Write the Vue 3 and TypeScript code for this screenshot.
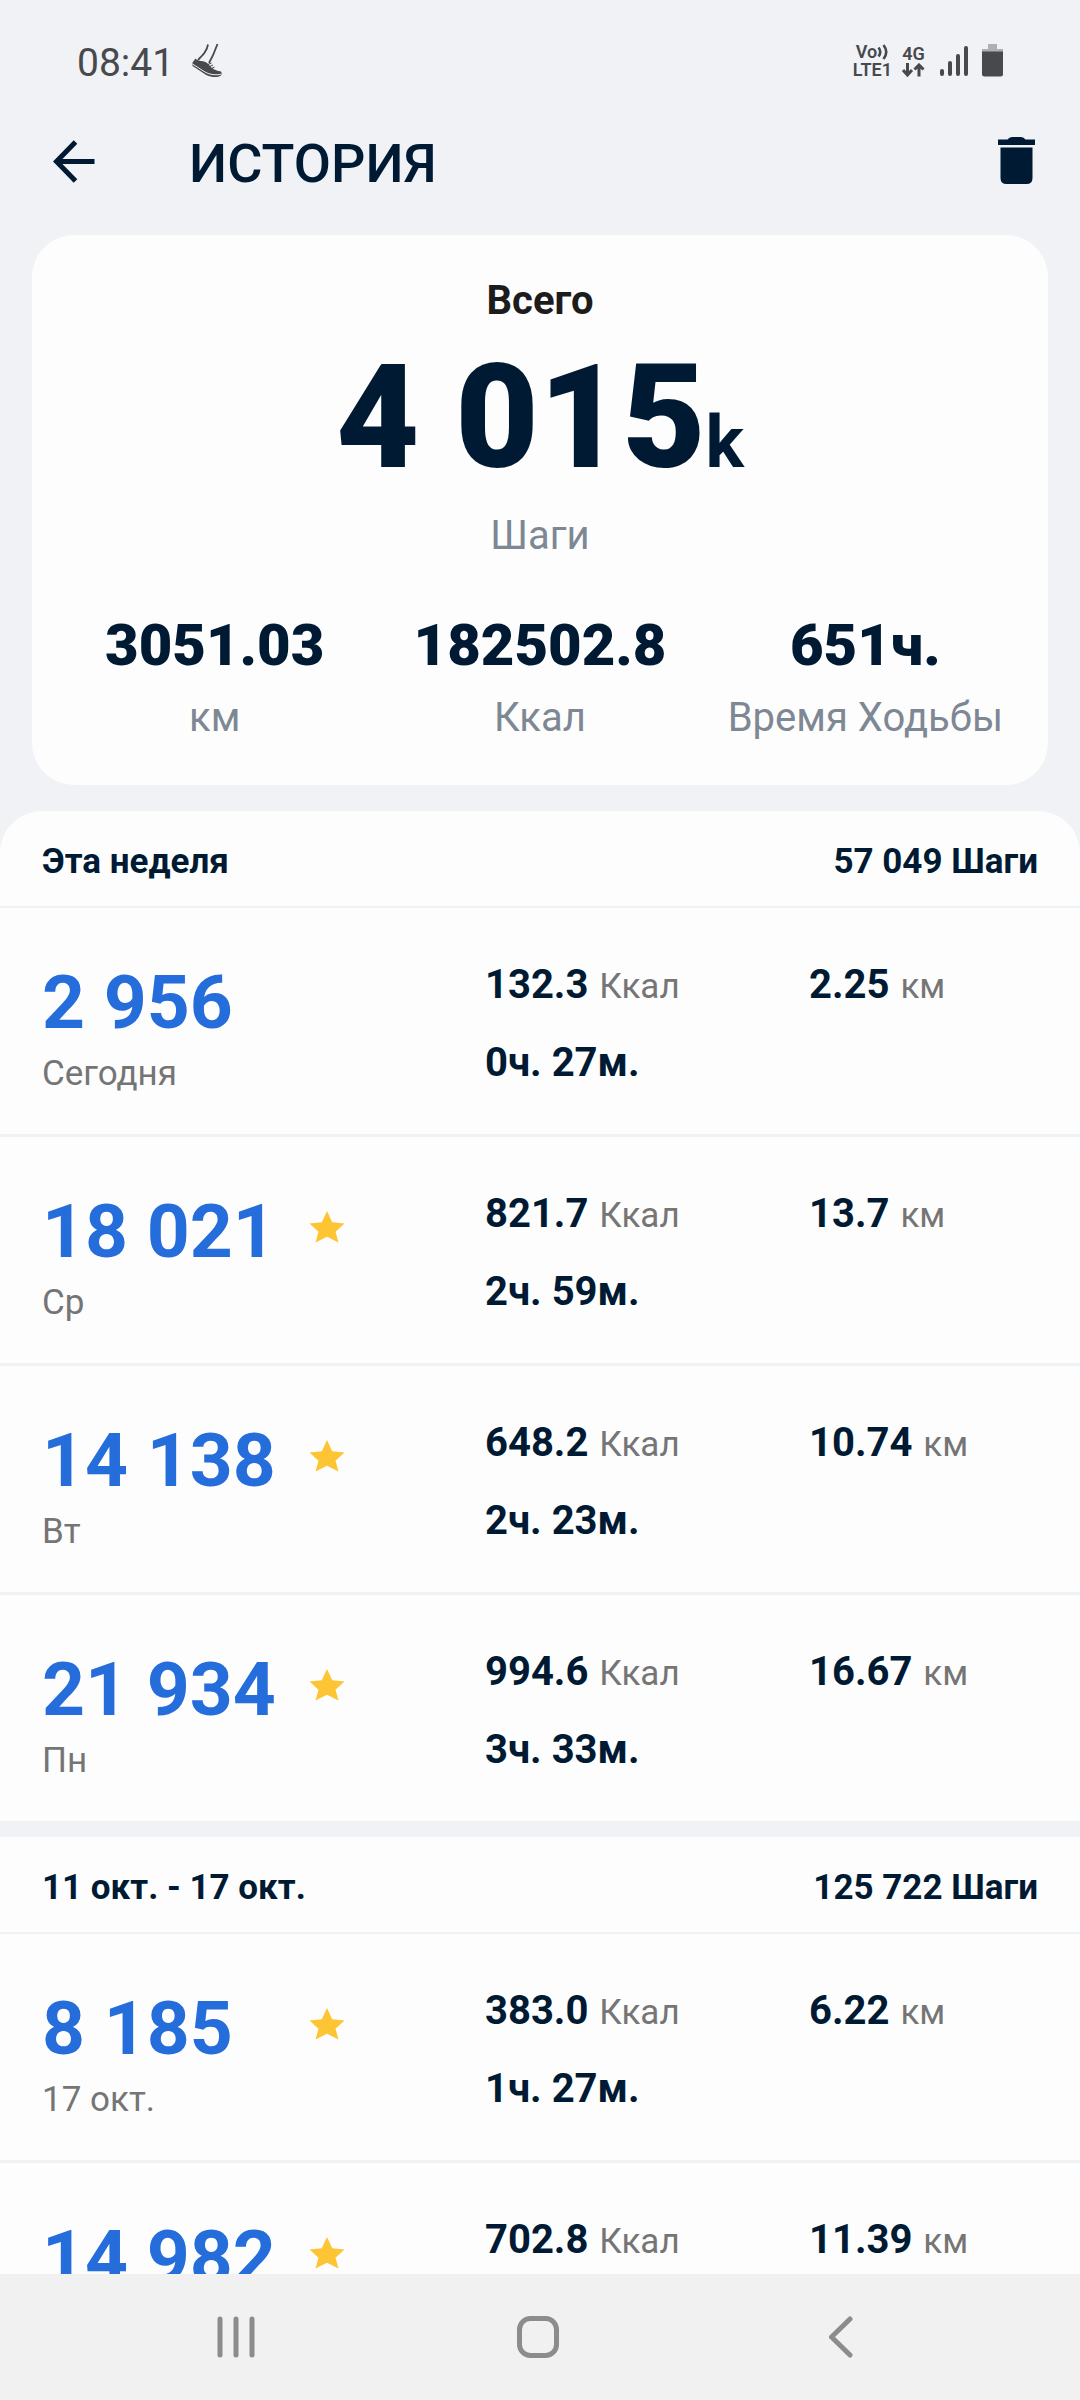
<script setup lang="ts">
interface Day {
  steps: string
  label: string
  goal: boolean
  kcal: string
  km: string
  time: string
}

interface Week {
  title: string
  total: string
  days: Day[]
}

const totals = [
  { value: '3051.03', label: 'км' },
  { value: '182502.8', label: 'Ккал' },
  { value: '651ч.', label: 'Время Ходьбы' },
]

const weeks: Week[] = [
  {
    title: 'Эта неделя',
    total: '57 049 Шаги',
    days: [
      { steps: '2 956', label: 'Сегодня', goal: false, kcal: '132.3', km: '2.25', time: '0ч. 27м.' },
      { steps: '18 021', label: 'Ср', goal: true, kcal: '821.7', km: '13.7', time: '2ч. 59м.' },
      { steps: '14 138', label: 'Вт', goal: true, kcal: '648.2', km: '10.74', time: '2ч. 23м.' },
      { steps: '21 934', label: 'Пн', goal: true, kcal: '994.6', km: '16.67', time: '3ч. 33м.' },
    ],
  },
  {
    title: '11 окт. - 17 окт.',
    total: '125 722 Шаги',
    days: [
      { steps: '8 185', label: '17 окт.', goal: true, kcal: '383.0', km: '6.22', time: '1ч. 27м.' },
      { steps: '14 982', label: '', goal: true, kcal: '702.8', km: '11.39', time: '' },
    ],
  },
]
</script>

<template>
  <div class="screen">
    <div class="status">
      <div class="status-left">
        <span class="clock">08:41</span>
        <svg class="shoe" width="32" height="36" viewBox="0 0 32 36" aria-hidden="true">
          <path d="M17 1.500C16 8 12 12 7 17M26.500 1C24 8 22 13 18 20" fill="none" stroke="#47494d" stroke-width="1.800" />
          <path d="M4.500 15.500C7 18.500 10 17.500 13 18.500C16 19 17 21 18.500 22.500C21 26 25 27.500 30 28.500C31.500 31 31 34.500 22 34C17 33.500 14 31.500 10 28.500L1.500 23L1.500 19.500Z" fill="#47494d" />
          <path d="M1.500 21L14 29C19 31.800 25 32.400 30 31.200" fill="none" stroke="#f0f2f6" stroke-width="1" />
          <path d="M17 21.500L20.500 20M18.500 23.500L22 22M20.500 25.500L23.500 24" stroke="#47494d" stroke-width="1" />
        </svg>
      </div>
      <div class="status-right">
        <div class="net">
          <span class="net-line">Vo<svg width="12" height="18" viewBox="0 0 12 18" aria-hidden="true"><path d="M1.500 4.500Q5 9 1.500 13.500M6.500 2Q12 9 6.500 16" fill="none" stroke="#47494d" stroke-width="2.600" /></svg></span>
          <span class="net-line">LTE1</span>
        </div>
        <div class="net lte">
          <span class="net-line">4G</span>
          <svg width="23" height="14" viewBox="0 0 23 14" aria-hidden="true">
            <path d="M5.500 0V12M1 7L5.500 12L10 7M17 13.500V2M12.500 6.500L17 2L21.500 6.500" fill="none" stroke="#47494d" stroke-width="3" />
          </svg>
        </div>
        <svg class="signal" width="28" height="32" viewBox="0 0 28 32" aria-hidden="true">
          <g fill="#47494d">
            <rect x="0" y="24" width="4" height="7" rx="2" />
            <rect x="8" y="16" width="4" height="15" rx="2" />
            <rect x="16" y="9" width="4" height="22" rx="2" />
            <rect x="24" y="1" width="4" height="30" rx="2" />
          </g>
        </svg>
        <svg width="21" height="34" viewBox="0 0 21 34" aria-hidden="true">
          <path d="M6 0H15V5H21V8H0V5H6Z" fill="#aeafb3" />
          <path d="M0 7.500H21V30Q21 32.500 18.500 32.500H2.500Q0 32.500 0 30Z" fill="#47494d" />
        </svg>
      </div>
    </div>

    <header class="appbar">
      <button class="icon-btn" type="button" aria-label="Назад">
        <svg width="42" height="44" viewBox="0 0 42 44" aria-hidden="true">
          <path d="M41.500 21.500H4M22.500 2L3.500 21.500L22.500 41" fill="none" stroke="#001a33" stroke-width="5" />
        </svg>
      </button>
      <h1 class="title">ИСТОРИЯ</h1>
      <button class="icon-btn" type="button" aria-label="Удалить">
        <svg width="37" height="50" viewBox="0 0 37 50" aria-hidden="true">
          <path d="M0 2.500H9.500Q11 0 14 0H23Q26 0 27.500 2.500H37V8H0Z" fill="#001a33" />
          <path d="M2.500 10.500H34.500V41Q34.500 47 28.500 47H8.500Q2.500 47 2.500 41Z" fill="#001a33" />
        </svg>
      </button>
    </header>

    <main class="content">
      <section class="card">
        <h2 class="card-title">Всего</h2>
        <p class="total">4 015<span class="thousand">k</span></p>
        <p class="caption">Шаги</p>
        <ul class="totals">
          <li v-for="item in totals" :key="item.label">
            <strong class="stat">{{ item.value }}</strong>
            <span class="caption">{{ item.label }}</span>
          </li>
        </ul>
      </section>

      <div class="weeks">
        <section v-for="week in weeks" :key="week.title" class="week">
          <header class="week-head">
            <h3>{{ week.title }}</h3>
            <span>{{ week.total }}</span>
          </header>
          <ul class="days">
            <li v-for="day in week.days" :key="day.steps" class="day">
              <div class="walk">
                <div class="walk-top">
                  <span class="steps">{{ day.steps }}</span>
                  <svg v-if="day.goal" width="36" height="40" viewBox="0 0 36 40" aria-label="Цель достигнута">
                    <path d="M18 0L23.200 11.200L35.500 12.500L26.500 20.800L29.500 31.500L18 25.800L6.500 31.500L9.500 20.800L0.500 12.500L12.800 11.200Z" fill="#fdc534" />
                  </svg>
                </div>
                <span class="unit">{{ day.label }}</span>
              </div>
              <div class="metrics">
                <span class="metric">{{ day.kcal }} <span class="unit">Ккал</span></span>
                <span class="metric">{{ day.time }}</span>
              </div>
              <span class="metric">{{ day.km }} <span class="unit">км</span></span>
            </li>
          </ul>
        </section>
      </div>
    </main>

    <nav class="navbar">
      <button type="button" aria-label="Недавние">
        <svg width="38" height="42" viewBox="0 0 38 42" aria-hidden="true">
          <path d="M3 3V39M19 3V39M35 3V39" stroke="#8c8c8c" stroke-width="5" stroke-linecap="round" />
        </svg>
      </button>
      <button type="button" aria-label="Главный экран">
        <svg width="44" height="44" viewBox="0 0 44 44" aria-hidden="true">
          <rect x="3.500" y="3.500" width="37" height="37" rx="11" fill="none" stroke="#8c8c8c" stroke-width="5" />
        </svg>
      </button>
      <button type="button" aria-label="Назад">
        <svg width="25" height="42" viewBox="0 0 25 42" aria-hidden="true">
          <path d="M22 3L3.500 21L22 39" fill="none" stroke="#8c8c8c" stroke-width="5" stroke-linecap="round" stroke-linejoin="round" />
        </svg>
      </button>
    </nav>
  </div>
</template>

<style>
body {
  margin: 0;
  background: #f0f2f6;
}
</style>

<style scoped>
.screen {
  display: flex;
  flex-direction: column;
  height: 100vh;
  overflow: hidden;
  background: #f0f2f6;
  color: #001a33;
  font-family: Roboto, "Liberation Sans", sans-serif;
}

h1,
h2,
h3,
p,
ul {
  margin: 0;
  padding: 0;
  list-style: none;
}

svg {
  display: block;
  flex: none;
}

button {
  display: flex;
  align-items: center;
  justify-content: center;
  padding: 0;
  border: 0;
  background: none;
}

.status {
  flex: none;
  display: flex;
  align-items: center;
  justify-content: space-between;
  height: 82px;
  padding: 22px 77px 0;
  color: #47494d;
}

.status-left,
.status-right {
  display: flex;
  align-items: center;
}

.status-left {
  gap: 17px;
}

.clock {
  font-size: 39px;
  line-height: 52px;
}

.shoe {
  margin-bottom: 4px;
}

.status-right {
  padding-bottom: 4px;
}

.net {
  display: flex;
  flex-direction: column;
  align-items: center;
  font-size: 18px;
  font-weight: 600;
}

.net-line {
  display: flex;
  align-items: center;
  line-height: 18px;
}

.lte {
  margin: 0 15px 0 10px;
}

.signal {
  margin-right: 14px;
}

.appbar {
  flex: none;
  display: flex;
  align-items: center;
  height: 116px;
  padding: 0 45px 0 53px;
}

.title {
  flex: 1;
  padding: 4px 0 0 94px;
  font-size: 54px;
  font-weight: 500;
  line-height: 64px;
}

.content {
  flex: 1;
  min-height: 0;
  overflow: hidden;
  padding-top: 15px;
}

.card {
  margin: 0 32px 26px;
  padding: 40px 20px;
  border-radius: 42px;
  background: #fdfdfd;
  text-align: center;
}

.card-title {
  color: #1c1c1c;
  font-size: 40px;
  font-weight: 700;
  line-height: 52px;
}

.total {
  margin: 12px 0;
  font-size: 144px;
  font-weight: 900;
  line-height: 158px;
}

.thousand {
  font-size: 72px;
  font-weight: 700;
  line-height: 72px;
}

.caption {
  color: #7d8894;
  font-size: 40px;
  line-height: 54px;
}

.totals {
  display: grid;
  grid-template-columns: repeat(3, 1fr);
  margin-top: 48px;
}

.totals li {
  display: flex;
  flex-direction: column;
  gap: 12px;
  white-space: nowrap;
}

.stat {
  font-size: 58px;
  font-weight: 900;
  line-height: 68px;
}

.weeks {
  overflow: hidden;
  border-radius: 42px 42px 0 0;
}

.week {
  background: #fdfdfd;
}

.week + .week {
  border-top: 13px solid #f0f2f6;
}

.week-head {
  display: flex;
  align-items: center;
  justify-content: space-between;
  height: 89px;
  padding: 6px 42px 0;
  border-bottom: 2px solid #f0f1f3;
  font-size: 35px;
  font-weight: 700;
}

.week-head h3 {
  font-size: 35px;
  font-weight: 700;
}

.day {
  display: grid;
  grid-template-columns: 443fr 324fr 229fr;
  min-height: 176px;
  padding: 50px 42px 0;
  border-bottom: 3px solid #f0f1f3;
}

.walk {
  display: flex;
  flex-direction: column;
  gap: 5px;
}

.walk-top {
  display: flex;
  align-items: center;
}

.steps {
  width: 267px;
  color: #256ddb;
  font-size: 75px;
  font-weight: 700;
  line-height: 88px;
}

.metrics {
  display: flex;
  flex-direction: column;
  gap: 24px;
}

.metric {
  font-size: 40px;
  font-weight: 700;
  line-height: 54px;
}

.unit {
  color: #757575;
  font-size: 35px;
  font-weight: 400;
  line-height: 46px;
}

.metric .unit {
  margin-left: 1px;
}

.navbar {
  flex: none;
  display: flex;
  height: 126px;
  padding: 0 88px 0 85px;
  background: #f1f1f1;
}

.navbar button {
  flex: 1;
}
</style>
